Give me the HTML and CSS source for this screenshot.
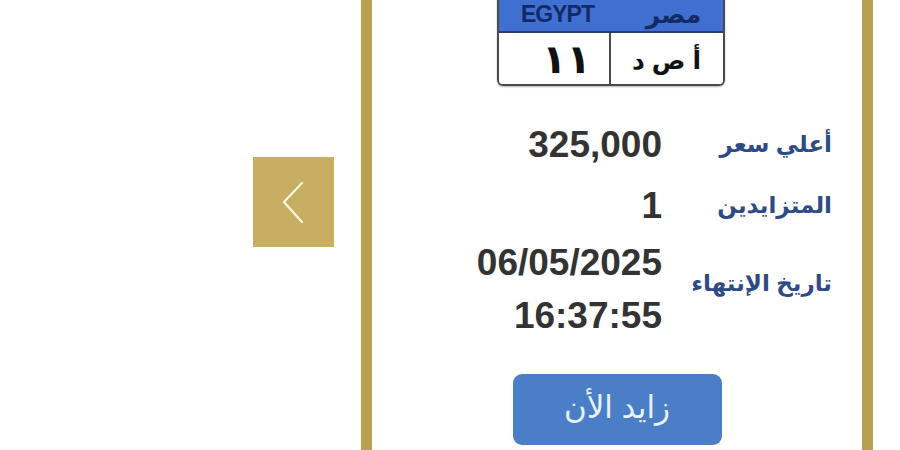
FILE: index.html
```html
<!DOCTYPE html>
<html lang="ar">
<head>
<meta charset="utf-8">
<title>مزاد اللوحات</title>
<link rel="stylesheet" href="styles.css">
</head>
<body>
<div class="page">
  <div class="nav">
    <button class="prev" aria-label="السابق">
      <svg width="81" height="90" viewBox="0 0 81 90"><polyline points="49,26 31,45 49,65" fill="none" stroke="#fff7df" stroke-width="2.2" stroke-linecap="round" stroke-linejoin="round"/></svg>
    </button>
  </div>
  <div class="card">
    <div class="plate">
      <div class="band">
        <span class="en">EGYPT</span>
        <span class="ar">مصر</span>
      </div>
      <div class="num">
        <span class="digits">١١</span>
        <span class="letters">أ ص د</span>
      </div>
    </div>
    <div class="info" dir="rtl">
      <div class="label">أعلي سعر</div>
      <div class="value">325,000</div>
      <div class="label r2">المتزايدين</div>
      <div class="value r2">1</div>
      <div class="label r3">تاريخ الإنتهاء</div>
      <div class="value">06/05/2025<br>16:37:55</div>
    </div>
    <div class="actions">
      <button class="bid">زايد الأن</button>
    </div>
  </div>
</div>
</body>
</html>
```
FILE: styles.css
```css
html, body {
  margin: 0;
  padding: 0;
  background: #ffffff;
  overflow: hidden;
}
body {
  font-family: "Liberation Sans", "DejaVu Sans", sans-serif;
  width: 900px;
  height: 450px;
}
.page {
  display: flex;
  align-items: flex-start;
}
.nav {
  width: 361px;
  box-sizing: border-box;
  padding-top: 157px;
  padding-left: 253px;
}
.prev {
  display: block;
  width: 81px;
  height: 90px;
  padding: 0;
  border: none;
  background: #c8ae62;
}
.prev svg { display: block; }
.card {
  width: 512px;
  height: 560px;
  box-sizing: border-box;
  margin-top: -30px;
  border: 11px solid #b8a052;
  background: #fff;
  display: flex;
  flex-direction: column;
  align-items: center;
}
.plate {
  width: 224px;
  margin-left: -13px;
  border: 2px solid #4a4a4a;
  border-top: none;
  border-radius: 0 0 6px 6px;
  overflow: hidden;
  box-shadow: 0 1px 2px rgba(0,0,0,0.3);
}
.band {
  height: 52px;
  background: #3f6fd1;
  display: grid;
  grid-template-columns: 1fr 1fr;
  align-items: end;
  padding-bottom: 6px;
  box-sizing: border-box;
  border-bottom: 2px solid #2d3d66;
}
.band span {
  text-align: center;
  color: #142a66;
  font-weight: bold;
}
.band .en {
  font-size: 23px;
  letter-spacing: -1px;
  line-height: 22px;
  padding-left: 6px;
}
.band .ar {
  font-size: 25px;
  line-height: 22px;
  padding-left: 14px;
}
.num {
  height: 51px;
  display: grid;
  grid-template-columns: 1fr 1fr;
  background: #fff;
}
.num span {
  display: flex;
  align-items: center;
  justify-content: center;
  color: #111;
}
.digits {
  border-right: 2px solid #4a4a4a;
  font-size: 40px;
  font-weight: bold;
  padding-left: 26px;
}
.letters {
  font-size: 25px;
  font-weight: bold;
  letter-spacing: -3px;
  padding-top: 4px;
}
.info {
  margin-top: 32px;
  width: 100%;
  box-sizing: border-box;
  padding-right: 30px;
  display: grid;
  grid-template-columns: 150px auto;
  justify-content: start;
  column-gap: 20px;
  row-gap: 4px;
}
.r2 {
  margin-top: 4px;
}
.r3 {
  margin-bottom: 12px;
}
.label {
  align-self: center;
  color: #2e4b86;
  font-size: 23px;
  font-weight: bold;
  text-align: right;
  white-space: nowrap;
}
.value {
  color: #333333;
  font-size: 37px;
  font-weight: bold;
  line-height: 53px;
  text-align: right;
}
.actions {
  margin-top: 32px;
  width: 100%;
  display: flex;
  justify-content: center;
}
.bid {
  width: 209px;
  height: 71px;
  border: none;
  border-radius: 9px;
  background: #4a7ec7;
  color: #e8f1ff;
  font-family: "Liberation Sans", "DejaVu Sans", sans-serif;
  font-size: 31px;
  padding: 0 0 4px 0;
}
```
